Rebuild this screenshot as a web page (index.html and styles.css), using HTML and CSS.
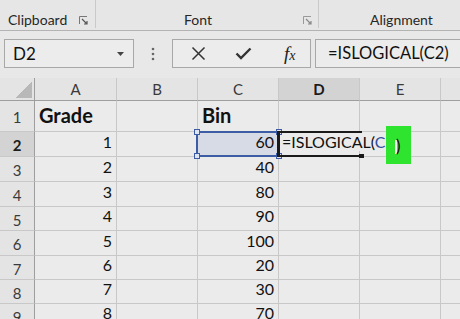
FILE: index.html
```html
<!DOCTYPE html>
<html>
<head>
  <title>ISLOGICAL</title>
<link rel="stylesheet" href="styles.css">
</head>
<body>

<div class="ribbon">
  <div class="group g-clip">
    <span class="glabel">Clipboard</span>
    <svg class="launch" width="9" height="9" viewBox="0 0 9 9"><path d="M0.5 8V0.5H8" fill="none" stroke="#777" stroke-width="1"/><path d="M3 3L8 8M8 5V8H5" fill="none" stroke="#555" stroke-width="1.2"/></svg>
  </div>
  <div class="group g-font">
    <span class="glabel">Font</span>
    <svg class="launch" width="9" height="9" viewBox="0 0 9 9"><path d="M0.5 8V0.5H8" fill="none" stroke="#999" stroke-width="1"/><path d="M3 3L8 8M8 5V8H5" fill="none" stroke="#888" stroke-width="1.2"/></svg>
  </div>
  <div class="group g-align">
    <span class="glabel">Alignment</span>
  </div>
</div>

<div class="fbar">
  <div class="namebox">
    <span>D2</span>
    <svg class="caret" width="7" height="4" viewBox="0 0 7 4"><path d="M0 0H7L3.5 4Z" fill="#444"/></svg>
  </div>
  <div class="dots">
    <svg width="4" height="14" viewBox="0 0 4 14"><circle cx="2" cy="2" r="1.3" fill="#666"/><circle cx="2" cy="7" r="1.3" fill="#666"/><circle cx="2" cy="12" r="1.3" fill="#666"/></svg>
  </div>
  <div class="fbtns">
    <svg class="ico-x" width="15" height="15" viewBox="0 0 15 15"><path d="M1.5 1.5L13.5 13.5M13.5 1.5L1.5 13.5" stroke="#333" stroke-width="1.5" fill="none"/></svg>
    <svg class="ico-ok" width="17" height="13" viewBox="0 0 17 13"><path d="M1.5 6.5L6 11L15.5 1.5" stroke="#333" stroke-width="2.4" fill="none"/></svg>
    <span class="fx">f<span class="fx-x">x</span></span>
  </div>
  <div class="formula">=ISLOGICAL(C2)</div>
</div>

<div class="sheet">
  <div class="c corner"></div>
  <div class="c ch">A</div>
  <div class="c ch">B</div>
  <div class="c ch">C</div>
  <div class="c ch hl">D</div>
  <div class="c ch">E</div>
  <div class="c ch"></div>

  <div class="c rh">1</div>
  <div class="c head">Grade</div>
  <div class="c"></div>
  <div class="c head">Bin</div>
  <div class="c"></div>
  <div class="c"></div>
  <div class="c"></div>

  <div class="c rh hl">2</div>
  <div class="c num">1</div>
  <div class="c"></div>
  <div class="c num sel">60</div>
  <div class="c edit"><span class="edit-text">=ISLOGICAL(<span class="ref">C</span></span></div>
  <div class="c"></div>
  <div class="c"></div>

  <div class="c rh">3</div>
  <div class="c num">2</div>
  <div class="c"></div>
  <div class="c num">40</div>
  <div class="c"></div>
  <div class="c"></div>
  <div class="c"></div>

  <div class="c rh">4</div>
  <div class="c num">3</div>
  <div class="c"></div>
  <div class="c num">80</div>
  <div class="c"></div>
  <div class="c"></div>
  <div class="c"></div>

  <div class="c rh">5</div>
  <div class="c num">4</div>
  <div class="c"></div>
  <div class="c num">90</div>
  <div class="c"></div>
  <div class="c"></div>
  <div class="c"></div>

  <div class="c rh">6</div>
  <div class="c num">5</div>
  <div class="c"></div>
  <div class="c num">100</div>
  <div class="c"></div>
  <div class="c"></div>
  <div class="c"></div>

  <div class="c rh">7</div>
  <div class="c num">6</div>
  <div class="c"></div>
  <div class="c num">20</div>
  <div class="c"></div>
  <div class="c"></div>
  <div class="c"></div>

  <div class="c rh">8</div>
  <div class="c num">7</div>
  <div class="c"></div>
  <div class="c num">30</div>
  <div class="c"></div>
  <div class="c"></div>
  <div class="c"></div>

  <div class="c rh">9</div>
  <div class="c num">8</div>
  <div class="c"></div>
  <div class="c num">70</div>
  <div class="c"></div>
  <div class="c"></div>
  <div class="c"></div>

  <!-- overlays: selection, edit box, highlight -->
  <div class="selbox">
    <i class="hd tl"></i><i class="hd tr"></i><i class="hd bl"></i><i class="hd br"></i>
  </div>
  <div class="editbox"><i class="fill-hd"></i></div>
  <div class="mark"><span class="mark-cur"></span>)</div>
</div>

</body>
</html>
```

FILE: styles.css
```css
body {
  margin: 0;
  width: 460px;
  height: 319px;
  overflow: hidden;
  background: #e8e8e8;
  font-family: Lato, 'Open Sans', sans-serif;
  color: #111;
}

/* ribbon group labels */
.ribbon {
  display: flex;
  align-items: flex-start;
  height: 30px;
  background: #e6e6e6;
  border-bottom: 1px solid #b3b3b3;
}

.group {
  display: flex;
  align-items: flex-end;
  box-sizing: border-box;
  height: 28px;
  padding-bottom: 0;
  font-size: 14px;
  color: #262626;
}

.g-clip {
  width: 96px;
  padding-left: 8px;
  border-right: 1px solid #c9c9c9;
}

.g-font {
  width: 223px;
  padding-left: 88px;
  border-right: 1px solid #c9c9c9;
}

.g-align {
  flex: 1;
  padding-left: 51px;
}

.launch {
  margin-left: auto;
  margin-bottom: 3px;
}

.g-clip .launch { margin-right: 7px; }
.g-font .launch { margin-right: 6px; }

/* formula bar */
.fbar {
  display: flex;
  align-items: flex-start;
  height: 47px;
  box-sizing: border-box;
  padding: 8px 0 0 4px;
}

.namebox,
.fbtns,
.formula {
  box-sizing: border-box;
  height: 29px;
  border: 1px solid #a8a8a8;
  background: #ececec;
}

.namebox {
  display: flex;
  align-items: center;
  justify-content: space-between;
  width: 130px;
  padding: 0 9px 0 8px;
  font-size: 17px;
}

.dots {
  display: flex;
  justify-content: center;
  align-items: center;
  width: 38px;
  height: 29px;
}

.fbtns {
  display: flex;
  align-items: center;
  width: 139px;
  padding-left: 18px;
}

.ico-ok {
  margin-left: 29px;
}

.fx {
  margin-left: 32px;
  font-family: 'Liberation Serif', serif;
  font-style: italic;
  font-size: 19px;
  color: #222;
}

.fx-x {
  font-size: 14px;
}

.formula {
  flex: 1;
  margin-left: 4px;
  border-right: none;
  padding: 3px 0 0 12px;
  font-size: 16.5px;
  white-space: nowrap;
}

/* sheet grid */
.sheet {
  position: relative;
  display: grid;
  grid-template-columns: 35px 82px 81px 81px 81px 81px 40px;
  grid-template-rows: 23px 31px 25px 25px 25px 24px 25px 24px 24px 24px;
}

.c {
  display: flex;
  align-items: flex-end;
  box-sizing: border-box;
  padding: 0 4px 5px;
  background: #ebebeb;
  border-right: 1px solid #c8c8c8;
  border-bottom: 1px solid #c8c8c8;
  font-size: 16px;
  white-space: nowrap;
}

.num { justify-content: flex-end; }

.head {
  padding-bottom: 4px;
  font-size: 20px;
  font-weight: bold;
}

.ch,
.rh,
.corner {
  justify-content: center;
  align-items: center;
  padding: 0;
  background: #e4e4e4;
  color: #3a3a3a;
  font-size: 15px;
}

.ch { border-bottom-color: #9e9e9e; }
.rh { border-right-color: #9e9e9e; padding-top: 2px; }

.corner {
  position: relative;
  border-right-color: #9e9e9e;
  border-bottom-color: #9e9e9e;
}

.corner::after {
  content: "";
  position: absolute;
  right: 2px;
  bottom: 2px;
  width: 16px;
  height: 17px;
  background: linear-gradient(to bottom right, transparent 50%, #b8b8b8 50%);
}

.hl {
  background: #d3d3d3;
  color: #1c1c1c;
  font-weight: bold;
}

.sel { background: #d7dbe6; }

.edit { overflow: visible; }

.edit-text {
  position: relative;
  z-index: 2;
  margin-left: -1px;
  padding-right: 2px;
  background: #ebebeb;
  font-size: 16px;
  line-height: 19px;
}

.ref { color: #2f4f9e; }

/* overlays */
.selbox {
  position: absolute;
  left: 196px;
  top: 53px;
  width: 84px;
  height: 26px;
  box-sizing: border-box;
  border: 2px solid #3d5ca6;
}

.hd {
  position: absolute;
  width: 4px;
  height: 4px;
  background: #dfe4f0;
  border: 1px solid #3d5ca6;
}

.tl { left: -4px; top: -4px; }
.tr { right: -4px; top: -4px; }
.bl { left: -4px; bottom: -4px; }
.br { right: -4px; bottom: -4px; }

.editbox {
  position: absolute;
  z-index: 3;
  left: 277px;
  top: 53px;
  width: 85px;
  height: 26px;
  box-sizing: border-box;
  border-top: 2px solid #1a1a1a;
  border-bottom: 2px solid #1a1a1a;
  border-left: 3px solid #1a1a1a;
}

.fill-hd {
  position: absolute;
  right: -2px;
  bottom: -3px;
  width: 5px;
  height: 4px;
  background: #1a1a1a;
}

.mark {
  position: absolute;
  z-index: 4;
  left: 386px;
  top: 48px;
  width: 25px;
  height: 38px;
  box-sizing: border-box;
  padding: 10px 0 0 9px;
  background: #2fe42f;
  font-size: 17px;
  line-height: 19px;
  color: #111;
}

.mark-cur {
  display: inline-block;
  width: 2px;
  height: 14px;
  margin-right: -1px;
  background: #f4f4f4;
  vertical-align: -2px;
}
```
